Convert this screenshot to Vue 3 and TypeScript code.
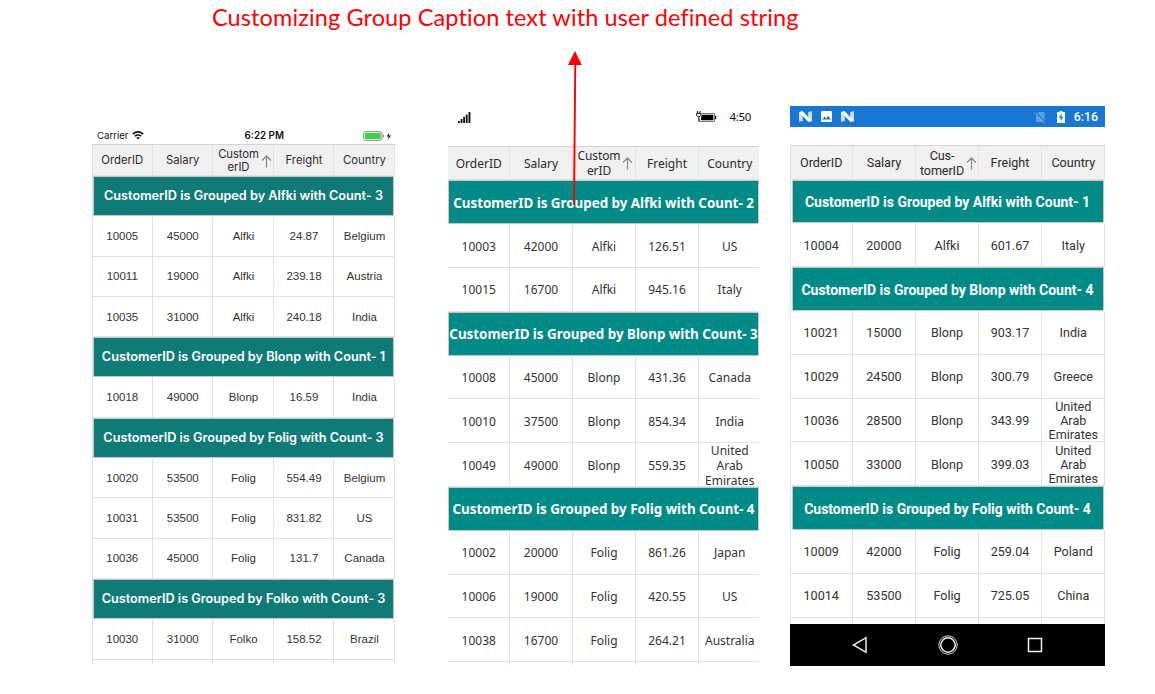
<script setup lang="ts">
type Row = string | string[]
interface Panel {
  kind: 'ios' | 'win' | 'droid'
  caption: string[]
  rows: Row[]
}

const group = (name: string, count: number): string =>
  `CustomerID is Grouped by ${name} with Count- ${count}`

const panels: Panel[] = [
  {
    kind: 'ios',
    caption: ['Custom', 'erID'],
    rows: [
      group('Alfki', 3),
      ['10005', '45000', 'Alfki', '24.87', 'Belgium'],
      ['10011', '19000', 'Alfki', '239.18', 'Austria'],
      ['10035', '31000', 'Alfki', '240.18', 'India'],
      group('Blonp', 1),
      ['10018', '49000', 'Blonp', '16.59', 'India'],
      group('Folig', 3),
      ['10020', '53500', 'Folig', '554.49', 'Belgium'],
      ['10031', '53500', 'Folig', '831.82', 'US'],
      ['10036', '45000', 'Folig', '131.7', 'Canada'],
      group('Folko', 3),
      ['10030', '31000', 'Folko', '158.52', 'Brazil'],
      ['', '', '', '', ''],
    ],
  },
  {
    kind: 'win',
    caption: ['Custom', 'erID'],
    rows: [
      group('Alfki', 2),
      ['10003', '42000', 'Alfki', '126.51', 'US'],
      ['10015', '16700', 'Alfki', '945.16', 'Italy'],
      group('Blonp', 3),
      ['10008', '45000', 'Blonp', '431.36', 'Canada'],
      ['10010', '37500', 'Blonp', '854.34', 'India'],
      ['10049', '49000', 'Blonp', '559.35', 'United Arab Emirates'],
      group('Folig', 4),
      ['10002', '20000', 'Folig', '861.26', 'Japan'],
      ['10006', '19000', 'Folig', '420.55', 'US'],
      ['10038', '16700', 'Folig', '264.21', 'Australia'],
      ['', '', '', '', ''],
    ],
  },
  {
    kind: 'droid',
    caption: ['Cus-', 'tomerID'],
    rows: [
      group('Alfki', 1),
      ['10004', '20000', 'Alfki', '601.67', 'Italy'],
      group('Blonp', 4),
      ['10021', '15000', 'Blonp', '903.17', 'India'],
      ['10029', '24500', 'Blonp', '300.79', 'Greece'],
      ['10036', '28500', 'Blonp', '343.99', 'United Arab Emirates'],
      ['10050', '33000', 'Blonp', '399.03', 'United Arab Emirates'],
      group('Folig', 4),
      ['10009', '42000', 'Folig', '259.04', 'Poland'],
      ['10014', '53500', 'Folig', '725.05', 'China'],
      ['', '', '', '', ''],
    ],
  },
]
</script>

<template>
  <main class="page">
    <h1 class="title">Customizing Group Caption text with user defined string</h1>
    <div class="panels">
      <section v-for="p in panels" :key="p.kind" class="panel" :class="p.kind">
        <header v-if="p.kind === 'ios'" class="status">
          <span class="carrier">Carrier
            <svg width="12" height="9" viewBox="0 0 12 9" fill="none" stroke="#111">
              <path d="M.8 3.1Q6-1.2 11.2 3.1" stroke-width="1.7" />
              <path d="M2.8 5.2Q6 2.7 9.2 5.2" stroke-width="1.5" />
              <path d="M4.2 6.6Q6 5.2 7.8 6.6L6 8.6Z" fill="#111" stroke="none" />
            </svg>
          </span>
          <span class="clock">6:22 PM</span>
          <svg class="battery" width="29" height="10" viewBox="0 0 29 10">
            <rect x=".5" y=".5" width="18.5" height="9" rx="2" fill="#fff" stroke="#999" />
            <rect x="1.7" y="1.7" width="16.1" height="6.6" rx="1" fill="#41d04d" />
            <path d="M20.3 3.4V6.6" stroke="#888" />
            <path d="M26.4 1.4L23.6 5.5H25.7L24.8 8.8L28 4.5H25.8Z" fill="#111" />
          </svg>
        </header>

        <header v-else-if="p.kind === 'win'" class="status">
          <svg class="signal" width="13" height="11" viewBox="0 0 13 11" fill="#111">
            <path d="M0 9h1.7v2H0zM2.6 7h1.8v4H2.6zM5.2 4.7H7V11H5.2zM7.8 2.5h1.8V11H7.8zM10.5 0h1.9v11h-1.9z" />
          </svg>
          <svg class="battery" width="21" height="13" viewBox="0 0 21 13">
            <path d="M5.5 2.5H18.5V10.5H3.5V8" fill="none" stroke="#777" />
            <path d="M6.2 3.8H17.3V9.2H5V6.6Z" fill="#000" />
            <path d="M19.6 4.8V8.2" stroke="#111" stroke-width="1.3" />
            <path d="M1.6 0V2M4 0V2M.6 2.3H5V4.2Q4.4 5.8 2.8 5.8Q1 5.8.6 4.2ZM2.8 6V10.5" fill="#fff" stroke="#111" />
          </svg>
          <span class="clock">4:50</span>
        </header>

        <header v-else class="status">
          <svg v-for="n in 3" :key="n" class="note" width="13" height="11" viewBox="0 0 13 11">
            <template v-if="n !== 2">
              <path d="M0 1L3.8 .3V10L0 10.7ZM9.2 1L13 .3V10L9.2 10.7Z" fill="#c9dff6" />
              <path d="M0 1L3.8 .3L13 10L9.2 10.7Z" fill="#fff" />
            </template>
            <template v-else>
              <rect x="1" y="0" width="11" height="11" rx="1.2" fill="#fff" />
              <path d="M2.3 8.6L4.6 5.7L6.2 7.5L8.3 4.8L10.8 8.6Z" fill="#1976d2" />
            </template>
          </svg>
          <svg class="sim" width="12" height="12" viewBox="0 0 12 12">
            <path d="M4.4 1H10.5V11H2V3.5Z" fill="#5e9fe0" />
            <path d="M1 .8L11.2 11.6" stroke="#1976d2" stroke-width="1.6" />
            <path d="M.6 1.4L10.8 12" stroke="#75aee6" />
          </svg>
          <svg class="battery" width="8" height="12" viewBox="0 0 8 12">
            <path d="M2.5 0H5.5V1H8V12H0V1H2.5Z" fill="#fff" />
            <path d="M4.5 2.6L1.8 6.8H3.7V10L6.3 5.7H4.5Z" fill="#1976d2" />
          </svg>
          <span class="clock">6:16</span>
        </header>

        <div class="grid">
          <div class="line head">
            <div class="cell"><span>OrderID</span></div>
            <div class="cell"><span>Salary</span></div>
            <div class="cell sorted">
              <span>{{ p.caption[0] }}<br />{{ p.caption[1] }}</span>
              <svg width="11" height="13" viewBox="0 0 11 13" fill="none">
                <path d="M5.5 12.5V1M1 5.5L5.5 1L10 5.5" />
              </svg>
            </div>
            <div class="cell"><span>Freight</span></div>
            <div class="cell"><span>Country</span></div>
          </div>
          <template v-for="(r, i) in p.rows" :key="i">
            <div v-if="typeof r === 'string'" class="group"><span>{{ r }}</span></div>
            <div v-else class="line">
              <div v-for="(c, j) in r" :key="j" class="cell"><span>{{ c }}</span></div>
            </div>
          </template>
        </div>

        <footer v-if="p.kind === 'droid'" class="nav">
          <svg width="16" height="18" viewBox="0 0 16 18"><path d="M14 1.7V16.3L1.5 9Z" /></svg>
          <svg width="20" height="20" viewBox="0 0 20 20">
            <circle cx="10" cy="10" r="9.2" stroke-width=".9" />
            <circle cx="10" cy="10" r="7.2" />
          </svg>
          <svg width="16" height="16" viewBox="0 0 16 16"><rect x="1.5" y="1.5" width="13" height="13" /></svg>
        </footer>
      </section>
    </div>
    <svg class="arrow" width="14" height="154" viewBox="0 0 14 154">
      <path d="M7.3 10L6 154" stroke="#f00" stroke-width="1.9" />
      <path d="M7 0L13.8 14H0Z" fill="#f00" />
    </svg>
  </main>
</template>

<style>
body {
  margin: 0;
  background: #fff;
}
</style>

<style scoped>
.page {
  position: relative;
  width: 1155px;
  height: 694px;
  overflow: hidden;
  background: #fff;
}
.title {
  margin: 0;
  padding-left: 212px;
  height: 36px;
  font: 400 23.5px/34px Lato, sans-serif;
  letter-spacing: 0.11px;
  color: #f00;
  white-space: nowrap;
}
.arrow {
  position: absolute;
  left: 568px;
  top: 51px;
}
.panels {
  display: flex;
  align-items: flex-start;
  padding-top: 70px;
}
.panel {
  display: flex;
  flex-direction: column;
  flex: none;
  height: 560px;
  overflow: hidden;
  color: #333;
}
.ios {
  --row: 40.3px;
  --cols: 60.5px 60.5px 61px 60px 61px;
  margin-left: 92px;
  width: 303px;
  height: 558px;
  font: 11.5px/13px 'Liberation Sans', sans-serif;
}
.win {
  --row: 43.8px;
  --cols: 61.5px 63px 63px 63px 60.5px;
  margin-left: 53px;
  width: 311px;
  height: 559px;
  font: 12px/15px 'Noto Sans', sans-serif;
}
.droid {
  --row: 43.8px;
  --cols: 62.5px 63px 63px 63px 63.5px;
  margin-left: 31px;
  width: 315px;
  font: 12.6px/14.2px Roboto, sans-serif;
}
.status {
  display: flex;
  align-items: center;
  flex: none;
  box-sizing: border-box;
  color: #111;
}
.ios .status {
  height: 38px;
  padding: 21px 3px 0 5px;
  justify-content: space-between;
  font: 9.6px/17px Inter, sans-serif;
}
.carrier {
  width: 98px;
}
.carrier svg {
  margin-left: 1px;
  vertical-align: -1px;
}
.ios .clock {
  font-weight: 600;
  font-size: 9.8px;
  width: 69px;
}
.win .status {
  height: 39.5px;
  padding: 0 8px 17.5px 10px;
}
.win .battery {
  margin-left: auto;
}
.win .clock {
  margin-left: 12px;
  font-size: 11.5px;
  letter-spacing: -0.3px;
  line-height: 13px;
  padding-bottom: 1px;
}
.droid .status {
  height: 21px;
  margin-bottom: 18.4px;
  padding: 0 7px 0 9px;
  background: #1976d2;
  color: #fff;
}
.note {
  margin-right: 8px;
}
.sim {
  margin-left: auto;
}
.droid .battery {
  margin: 0 9px 0 11px;
}
.droid .clock {
  padding-top: 2px;
  font-weight: 500;
  font-size: 12.3px;
}
.grid {
  flex: 1;
  overflow: hidden;
  border-top: 1px solid #d4d4d4;
  box-sizing: border-box;
}
.ios .grid,
.droid .grid {
  border-left: 1px solid #e2e2e2;
}
.line {
  display: grid;
  grid-template-columns: var(--cols);
  grid-template-rows: 100%;
  height: var(--row);
}
.ios .line,
.droid .line {
  margin-left: -1px;
}
.cell {
  display: flex;
  align-items: center;
  justify-content: center;
  box-sizing: border-box;
  min-width: 0;
  min-height: 0;
  padding: 1px 0 0 1px;
  text-align: center;
  border-right: 1px solid #e2e2e2;
  border-bottom: 1px solid #e2e2e2;
}
.droid .cell {
  padding-top: 2px;
}
.win .cell:last-child {
  padding-left: 2px;
  border-right: 0;
}
.head {
  height: 33.3px;
  background: #f0f0f0;
  color: #2b2b2b;
}
.ios .head {
  height: 31px;
  font: 11.3px/13.5px Inter, sans-serif;
}
.win .head {
  height: 33.9px;
}
.head .cell:not(.sorted) {
  padding-top: 2px;
}
.line .sorted {
  gap: 2px;
  padding-left: 4px;
  letter-spacing: -0.1px;
}
.ios .sorted {
  padding-top: 2px;
}
.sorted svg {
  flex: none;
  stroke: #8c8c8c;
  stroke-width: 1.3;
}
.group {
  display: flex;
  align-items: center;
  justify-content: center;
  height: var(--row);
  box-sizing: border-box;
  border: 1px solid #c8c8c8;
  background: #008b87;
  color: #fff;
  font-weight: 700;
  white-space: nowrap;
}
.ios .group {
  margin-right: 1px;
  background: #107a76;
  font: 600 12.7px/16px Inter, sans-serif;
}
.win .group {
  padding-top: 2px;
  font-size: 13.4px;
  letter-spacing: -0.02px;
}
.droid .group {
  margin: 0 1px;
  padding: 1px 1px 0 0;
  font-size: 14px;
}
.nav {
  display: flex;
  flex: none;
  align-items: center;
  justify-content: space-between;
  box-sizing: border-box;
  height: 42px;
  padding: 0 62px;
  background: #000;
}
.nav svg {
  fill: none;
  stroke: #eee;
  stroke-width: 1.5;
}
</style>
